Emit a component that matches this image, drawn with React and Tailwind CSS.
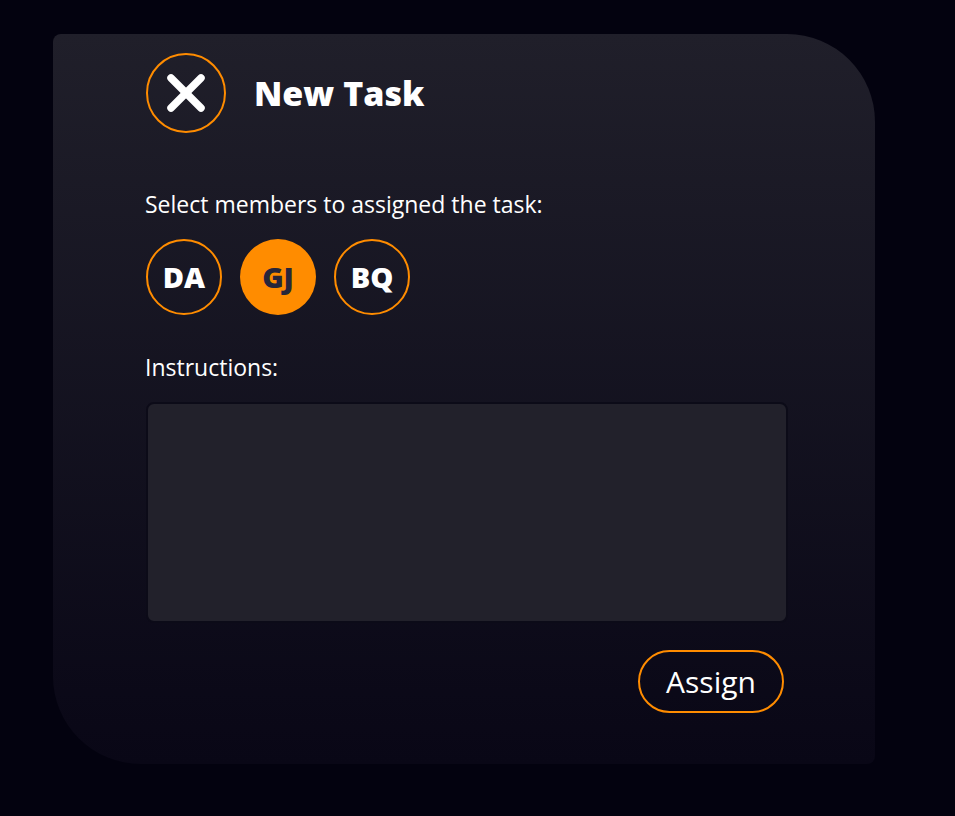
export default function App() {
  const font = { fontFamily: '"Open Sans", "Noto Sans", sans-serif' };
  return (
    <div className="min-h-[816px] w-full bg-[#03020f] pt-[34px] pl-[53px]" style={font}>
      <div className="w-[822px] h-[730px] rounded-tl-[8px] rounded-br-[8px] rounded-tr-[88px] rounded-bl-[88px] bg-gradient-to-b from-[#201f2a] to-[#090716] pl-[93px] pr-[88px] pt-[19px] flex flex-col">
        <div className="flex items-center gap-[28px]">
          <button className="w-[80px] h-[80px] rounded-full border-2 border-[#ff8c00] flex items-center justify-center">
            <svg width="40" height="40" viewBox="0 0 40 40">
              <line x1="5" y1="5" x2="35" y2="35" stroke="white" strokeWidth="7.5" strokeLinecap="round" />
              <line x1="35" y1="5" x2="5" y2="35" stroke="white" strokeWidth="7.5" strokeLinecap="round" />
            </svg>
          </button>
          <h1 className="text-[34px] font-extrabold text-white leading-none">New Task</h1>
        </div>
        <p className="mt-[55px] text-[23px] text-white leading-[32px] ml-[-1px]">Select members to assigned the task:</p>
        <div className="mt-[19px] flex gap-[18px]">
          <div className="w-[76px] h-[76px] rounded-full border-2 border-[#ff8c00] flex items-center justify-center text-white font-extrabold text-[29px]">DA</div>
          <div className="w-[76px] h-[76px] rounded-full bg-[#ff8c00] flex items-center justify-center text-[#27263a] font-extrabold text-[29px]">GJ</div>
          <div className="w-[76px] h-[76px] rounded-full border-2 border-[#ff8c00] flex items-center justify-center text-white font-extrabold text-[29px]">BQ</div>
        </div>
        <p className="mt-[36px] text-[23px] text-white leading-[32px] ml-[-1px]">Instructions:</p>
        <textarea className="mt-[19px] w-[642px] h-[221px] rounded-[8px] bg-[#22212b] border-2 border-[#0c0b18] resize-none outline-none text-white p-2" />
        <div className="mt-[27px] w-[642px] flex justify-end">
          <button className="w-[146px] h-[63px] mr-[4px] rounded-full border-2 border-[#ff8c00] text-white text-[30px] leading-none">Assign</button>
        </div>
      </div>
    </div>
  );
}
